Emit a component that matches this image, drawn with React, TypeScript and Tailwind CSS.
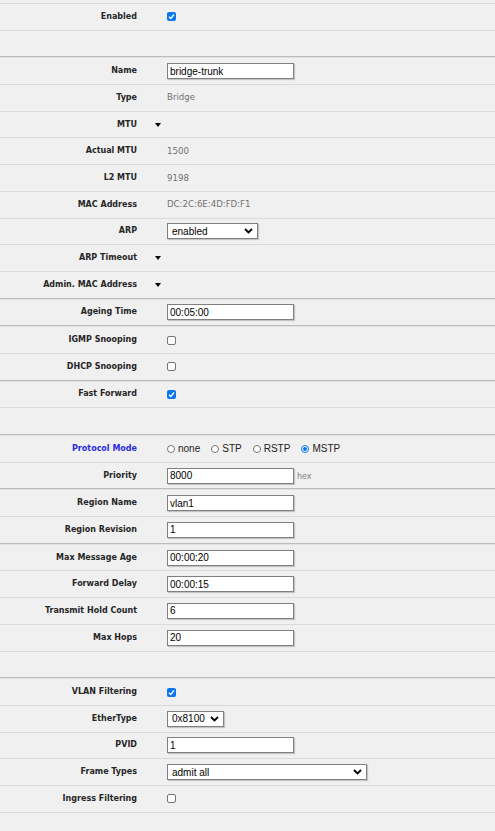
import React from "react";

const sans = "font-['DejaVu_Sans',Verdana,sans-serif]";
const arial = "font-['Liberation_Sans',Arial,sans-serif]";

function Tri() {
  return <span className="block h-0 w-0 border-x-[3px] border-t-[4px] border-x-transparent border-t-black" />;
}

function Check({ on }: { on?: boolean }) {
  if (!on) return <span className="block h-[9px] w-[9px] rounded-[2px] border border-[#767676] bg-white" />;
  return (
    <span className="flex h-[9px] w-[9px] items-center justify-center rounded-[2px] bg-[#0a75f0]">
      <svg width="7" height="7" viewBox="0 0 7 7">
        <polyline points="1,3.8 2.8,5.5 6,1.5" fill="none" stroke="white" strokeWidth="1.4" />
      </svg>
    </span>
  );
}

function Radio({ label, on }: { label: string; on?: boolean }) {
  return (
    <span className="flex items-center gap-[3px] mr-[11px]">
      {on ? (
        <span className="flex h-[8px] w-[8px] items-center justify-center rounded-full border border-[#0a75f0] bg-white">
          <span className="block h-[4px] w-[4px] rounded-full bg-[#0a75f0]" />
        </span>
      ) : (
        <span className="block h-[8px] w-[8px] rounded-full border border-[#767676] bg-white" />
      )}
      <span className={`${arial} text-[10px] text-[#222]`}>{label}</span>
    </span>
  );
}

function TextBox({ value }: { value: string }) {
  return (
    <input
      readOnly
      value={value}
      className={`${arial} block h-[16px] w-[127px] border border-[#808080] bg-white px-[2px] text-[10px] text-black shadow-[1px_1px_1px_rgba(0,0,0,0.18)] outline-none`}
    />
  );
}

function Select({ value, width }: { value: string; width: string }) {
  return (
    <div
      className={`${arial} ${width} flex h-[16px] items-center justify-between border border-[#808080] bg-white pl-[4px] pr-[4px] text-[10px] text-black shadow-[1px_1px_1px_rgba(0,0,0,0.18)]`}
    >
      <span>{value}</span>
      <svg width="9" height="6" viewBox="0 0 9 6">
        <polyline points="1,1 4.5,4.5 8,1" fill="none" stroke="black" strokeWidth="1.8" />
      </svg>
    </div>
  );
}

function Static({ children }: { children: React.ReactNode }) {
  return <span className={`${sans} text-[8.6px] text-[#707070]`}>{children}</span>;
}

function Row({
  label,
  children,
  arrow,
  blue,
  last,
}: {
  label?: string;
  children?: React.ReactNode;
  arrow?: boolean;
  blue?: boolean;
  last?: boolean;
}) {
  return (
    <div className={`flex h-[26.7px] items-center border-b ${last ? "border-[#bcbcbc]" : "border-[#dadada]"}`}>
      <div
        className={`${sans} w-[137px] shrink-0 text-right text-[8px] font-bold ${blue ? "text-[#2b2be0]" : "text-[#262626]"}`}
      >
        {label}
      </div>
      <div className="w-[30px] shrink-0 pl-[18px]">{arrow && <Tri />}</div>
      <div className="flex items-center">{children}</div>
    </div>
  );
}

function Sep() {
  return <div className="h-px bg-[#e2e2e2]" />;
}

export default function App() {
  return (
    <div className="min-h-screen bg-[#f0f0f0] pt-[3px]">
      <div className="border-t border-[#dadada]">
        <Row label="Enabled">
          <Check on />
        </Row>
        <Row last />
        <Sep />

        <Row label="Name">
          <TextBox value="bridge-trunk" />
        </Row>
        <Row label="Type">
          <Static>Bridge</Static>
        </Row>
        <Row label="MTU" arrow />
        <Row label="Actual MTU">
          <Static>1500</Static>
        </Row>
        <Row label="L2 MTU">
          <Static>9198</Static>
        </Row>
        <Row label="MAC Address">
          <Static>DC:2C:6E:4D:FD:F1</Static>
        </Row>
        <Row label="ARP">
          <Select value="enabled" width="w-[91px]" />
        </Row>
        <Row label="ARP Timeout" arrow />
        <Row label="Admin. MAC Address" arrow last />
        <Sep />

        <Row label="Ageing Time" last>
          <TextBox value="00:05:00" />
        </Row>
        <Sep />

        <Row label="IGMP Snooping">
          <Check />
        </Row>
        <Row label="DHCP Snooping" last>
          <Check />
        </Row>
        <Sep />

        <Row label="Fast Forward">
          <Check on />
        </Row>
        <Row last />
        <Sep />

        <Row label="Protocol Mode" blue>
          <Radio label="none" />
          <Radio label="STP" />
          <Radio label="RSTP" />
          <Radio label="MSTP" on />
        </Row>
        <Row label="Priority" last>
          <TextBox value="8000" />
          <span className={`${sans} ml-[3px] mt-[3px] text-[8px] text-[#808080]`}>hex</span>
        </Row>
        <Sep />

        <Row label="Region Name">
          <TextBox value="vlan1" />
        </Row>
        <Row label="Region Revision" last>
          <TextBox value="1" />
        </Row>
        <Sep />

        <Row label="Max Message Age">
          <TextBox value="00:00:20" />
        </Row>
        <Row label="Forward Delay">
          <TextBox value="00:00:15" />
        </Row>
        <Row label="Transmit Hold Count">
          <TextBox value="6" />
        </Row>
        <Row label="Max Hops">
          <TextBox value="20" />
        </Row>
        <Row last />
        <Sep />

        <Row label="VLAN Filtering">
          <Check on />
        </Row>
        <Row label="EtherType">
          <Select value="0x8100" width="w-[57px]" />
        </Row>
        <Row label="PVID">
          <TextBox value="1" />
        </Row>
        <Row label="Frame Types">
          <Select value="admit all" width="w-[200px]" />
        </Row>
        <Row label="Ingress Filtering">
          <Check />
        </Row>
        <Row />
      </div>
    </div>
  );
}
